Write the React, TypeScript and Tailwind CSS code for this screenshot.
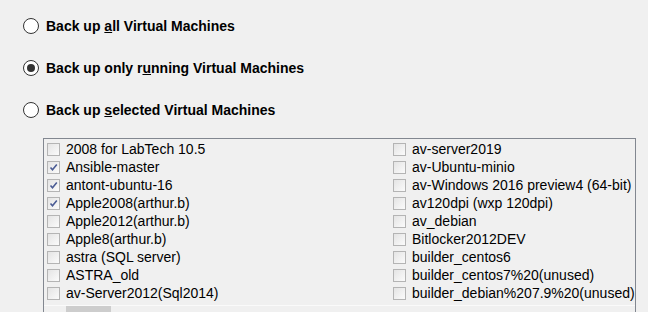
import React from "react";

const left = [
  { name: "2008 for LabTech 10.5", checked: false },
  { name: "Ansible-master", checked: true },
  { name: "antont-ubuntu-16", checked: true },
  { name: "Apple2008(arthur.b)", checked: true },
  { name: "Apple2012(arthur.b)", checked: false },
  { name: "Apple8(arthur.b)", checked: false },
  { name: "astra (SQL server)", checked: false },
  { name: "ASTRA_old", checked: false },
  { name: "av-Server2012(Sql2014)", checked: false },
];

const right = [
  { name: "av-server2019", checked: false },
  { name: "av-Ubuntu-minio", checked: false },
  { name: "av-Windows 2016 preview4 (64-bit)", checked: false },
  { name: "av120dpi (wxp 120dpi)", checked: false },
  { name: "av_debian", checked: false },
  { name: "Bitlocker2012DEV", checked: false },
  { name: "builder_centos6", checked: false },
  { name: "builder_centos7%20(unused)", checked: false },
  { name: "builder_debian%207.9%20(unused)", checked: false },
];

function Radio({ selected, children }: { selected?: boolean; children: React.ReactNode }) {
  return (
    <div className="flex h-[42px] items-center gap-[7px]">
      <span className="flex h-[16px] w-[16px] items-center justify-center rounded-full border border-[#333] bg-white">
        {selected && <span className="h-[8px] w-[8px] rounded-full bg-[#333]" />}
      </span>
      <span className="text-[14px] font-bold text-black">{children}</span>
    </div>
  );
}

function Check({ name, checked }: { name: string; checked: boolean }) {
  return (
    <div className="flex h-[18px] items-center gap-[6px] whitespace-nowrap">
      <span className="flex h-[13px] w-[13px] shrink-0 items-center justify-center border border-[#b4b4b4] bg-gradient-to-br from-[#e4e4e4] to-[#fbfbfb]">
        {checked && (
          <svg width="9" height="9" viewBox="0 0 9 9">
            <path d="M1.5 4.5 L3.5 6.8 L7.8 1.6" fill="none" stroke="#4a5b94" strokeWidth="1.6" />
          </svg>
        )}
      </span>
      <span className="text-[14px] text-black">{name}</span>
    </div>
  );
}

export default function App() {
  return (
    <div className="h-[312px] w-[648px] overflow-hidden bg-[#f0f0f0] font-['Liberation_Sans',Arial,sans-serif]">
      <div className="flex flex-col pl-[23px] pt-[5px]">
        <Radio>
          Back up <u>a</u>ll Virtual Machines
        </Radio>
        <Radio selected>
          Back up only r<u>u</u>nning Virtual Machines
        </Radio>
        <Radio>
          Back up <u>s</u>elected Virtual Machines
        </Radio>
      </div>
      <div className="ml-[43px] mt-[7px] h-[200px] w-[593px] border border-[#828790]">
        <div className="flex pt-[1px]">
          <div className="flex w-[349px] flex-col pl-[3px]">
            {left.map((v) => (
              <Check key={v.name} {...v} />
            ))}
          </div>
          <div className="flex flex-col">
            {right.map((v) => (
              <Check key={v.name} {...v} />
            ))}
          </div>
        </div>
        <div className="mt-[3px] flex h-[17px] border-t border-[#fafafa]">
          <div className="w-[22px]" />
          <div className="h-full w-[45px] bg-[#cdcdcd]" />
        </div>
      </div>
    </div>
  );
}
